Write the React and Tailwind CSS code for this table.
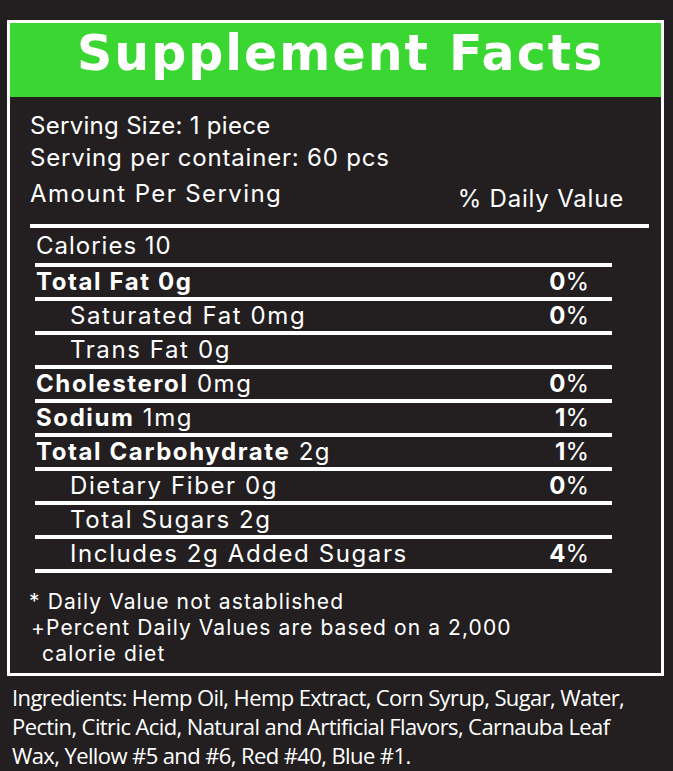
const rows = [
  { bold: "Total Fat 0g", dv: "0" },
  { name: "Saturated Fat 0mg", dv: "0", indent: true },
  { name: "Trans Fat 0g", indent: true },
  { bold: "Cholesterol", rest: " 0mg", dv: "0" },
  { bold: "Sodium", rest: " 1mg", dv: "1" },
  { bold: "Total Carbohydrate", rest: " 2g", dv: "1" },
  { name: "Dietary Fiber 0g", dv: "0", indent: true },
  { name: "Total Sugars 2g", indent: true },
  { name: "Includes 2g Added Sugars", dv: "4", indent: true },
];

const Row = ({ row }) => (
  <div className="h-[34px] border-b-4 border-white flex items-center justify-between pr-[23px]">
    <div className={row.indent ? "pl-[35px]" : "pl-[1px]"}>
      {row.bold ? (
        <>
          <span className="font-bold">{row.bold}</span>
          {row.rest}
        </>
      ) : (
        row.name
      )}
    </div>
    {row.dv && (
      <div className="tracking-normal">
        <span className="font-bold">{row.dv}</span>%
      </div>
    )}
  </div>
);

export default function App() {
  return (
    <div className="w-[673px] h-[771px] bg-[#231f20] text-white pt-[20px] font-['Inter',sans-serif] overflow-hidden">
      <div className="ml-[7px] w-[657px] h-[656px] border-[3px] border-white">
        <div className="h-[74px] bg-[#3ad631] pl-[67px] pt-[6px]">
          <h1 className="text-[49px] font-bold leading-none tracking-[2px] font-['DejaVu_Sans',sans-serif]">
            Supplement Facts
          </h1>
        </div>

        <div className="pl-[20px] pr-[12px] text-[24px] leading-[32px] tracking-[0.8px]">
          <div className="pt-[13px] tracking-[0.3px]">Serving Size: 1 piece</div>
          <div>Serving per container: 60 pcs</div>
          <div className="flex justify-between pr-[25px] pb-[14px] pt-[4px]">
            <span className="tracking-[1.4px]">Amount Per Serving</span>
            <span className="relative top-[5px]">% Daily Value</span>
          </div>
          <div className="h-[4px] bg-white" />
        </div>

        <div className="ml-[25px] mr-[49px] text-[24px] leading-none tracking-[1.6px]">
          <div className="h-[39px] border-b-4 border-white flex items-center pl-[1px] tracking-[1px]">Calories 10</div>
          {rows.map((row, i) => (
            <Row key={i} row={row} />
          ))}
        </div>

        <div className="pl-[19px] pt-[16px] text-[21px] leading-[26px] tracking-[1.1px]">
          <div>* Daily Value not astablished</div>
          <div className="pl-[2px]">+Percent Daily Values are based on a 2,000</div>
          <div className="pl-[13px]">calorie diet</div>
        </div>
      </div>

      <div className="pl-[12px] pt-[7px] text-[22px] leading-[29px] tracking-[-0.6px] font-['Open_Sans',sans-serif] whitespace-nowrap">
        Ingredients: Hemp Oil, Hemp Extract, Corn Syrup, Sugar, Water,
        <br />
        Pectin, Citric Acid, Natural and Artificial Flavors, Carnauba Leaf
        <br />
        Wax, Yellow #5 and #6, Red #40, Blue #1.
      </div>
    </div>
  );
}
